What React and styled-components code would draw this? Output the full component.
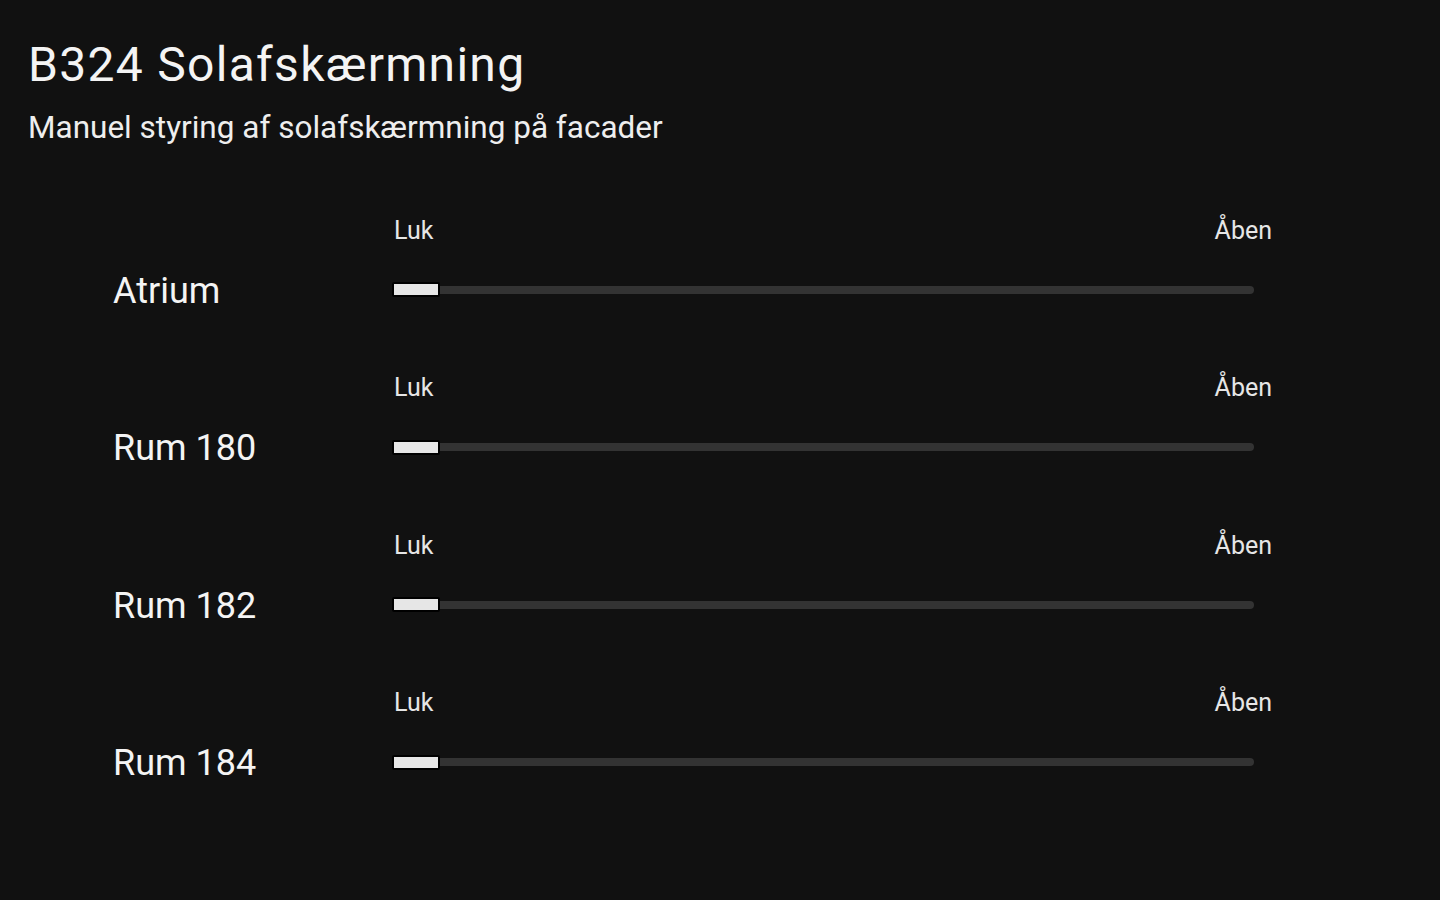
import styled, { createGlobalStyle } from 'styled-components';

const GlobalStyle = createGlobalStyle`
	html, body {
		margin: 0;
		padding: 0;
		background: #111111;
	}
	body {
		font-family: Roboto, "Noto Sans", "Liberation Sans", sans-serif;
		color: #f2f2f2;
	}
`;

const Page = styled.div`
	min-height: 900px;
	box-sizing: border-box;
	padding: 36px 28px 0;
	background: #111111;
`;

const Title = styled.h1`
	margin: 0;
	font-size: 48px;
	font-weight: 400;
	line-height: 1.2;
	letter-spacing: 1.3px;
	color: #f4f4f4;
`;

const Subtitle = styled.p`
	margin: 15px 0 0;
	font-size: 31.5px;
	font-weight: 400;
	line-height: 1.2;
	color: #eeeeee;
`;

const List = styled.div`
	margin-top: 70.5px;
	padding-left: 85px;
	display: flex;
	flex-direction: column;
	gap: 74.5px;
`;

const Row = styled.div`
	display: grid;
	grid-template-columns: 281px 878px;
	align-items: end;
`;

const Name = styled.div`
	font-size: 36px;
	line-height: 48px;
	height: 48px;
	margin-bottom: -15px;
	color: #f4f4f4;
`;

const Control = styled.div`
	display: flex;
	flex-direction: column;
`;

const Ends = styled.div`
	display: flex;
	justify-content: space-between;
	height: 28px;
	font-size: 25px;
	line-height: 28px;
	color: #e6e6e6;
	margin-bottom: 35px;
`;

const Rail = styled.div`
	position: relative;
	width: 860px;
	height: 20px;
	display: flex;
	align-items: center;

	&::before{
		content: '';
		display: block;
		width: 100%;
		height: 8px;
		border-radius: 4px;
		background: #333333;
	}
`;

const Thumb = styled.div`
	position: absolute;
	top: 2.5px;
	width: 44px;
	height: 11px;
	border: 2px solid #000;
	border-radius: 2px;
	background: #e6e6e6;
	transform: translateX(-2px);
`;

const rooms = [
	{ id: 1, name: 'Atrium', value: 0 },
	{ id: 2, name: 'Rum 180', value: 0 },
	{ id: 3, name: 'Rum 182', value: 0 },
	{ id: 4, name: 'Rum 184', value: 0 },
];

const ShadeSlider = ({ value }) => (
	<Control>
		<Ends>
			<span>Luk</span>
			<span>Åben</span>
		</Ends>
		<Rail>
			<Thumb style={{ left: `${value * (860 - 44)}px` }} />
		</Rail>
	</Control>
);

export default function App() {
	return (
		<Page>
			<GlobalStyle />
			<Title>B324 Solafskærmning</Title>
			<Subtitle>Manuel styring af solafskærmning på facader</Subtitle>
			<List>
				{rooms.map(room => (
					<Row key={room.id}>
						<Name>{room.name}</Name>
						<ShadeSlider value={room.value} />
					</Row>
				))}
			</List>
		</Page>
	);
}
